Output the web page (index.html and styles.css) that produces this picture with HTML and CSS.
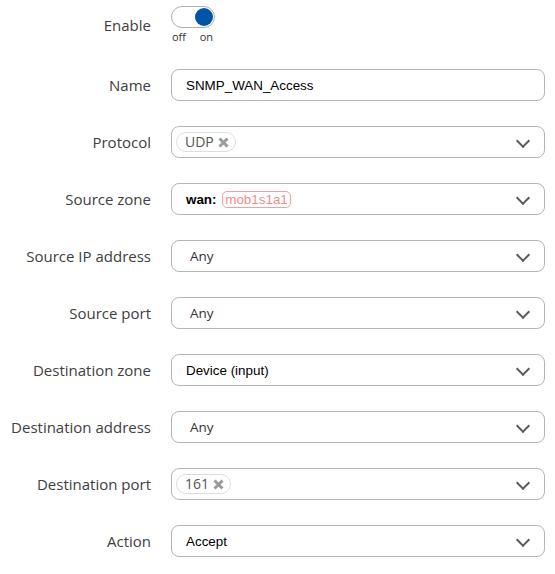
FILE: index.html
```html
<!DOCTYPE html>
<html>
<head>
<meta charset="utf-8">
<link rel="stylesheet" href="styles.css">
</head>
<body>
<div class="form">
  <div class="row row-toggle">
    <div class="label">Enable</div>
    <div class="toggle-wrap">
      <div class="toggle"><span class="knob"></span></div>
      <div class="toggle-text"><span>off</span><span>on</span></div>
    </div>
  </div>

  <div class="row">
    <div class="label">Name</div>
    <div class="field"><span class="val">SNMP_WAN_Access</span></div>
  </div>

  <div class="row">
    <div class="label">Protocol</div>
    <div class="field select chips"><span class="chip">UDP<svg class="x" width="11" height="11" viewBox="0 0 11 11"><path d="M1.5 1.5 L9.5 9.5 M9.5 1.5 L1.5 9.5" stroke="#9a9a9a" stroke-width="3" stroke-linecap="butt"/></svg></span></div>
  </div>

  <div class="row">
    <div class="label">Source zone</div>
    <div class="field select"><span class="val"><b>wan:</b> <span class="zone">mob1s1a1</span></span></div>
  </div>

  <div class="row">
    <div class="label">Source IP address</div>
    <div class="field select"><span class="any">Any</span></div>
  </div>

  <div class="row">
    <div class="label">Source port</div>
    <div class="field select"><span class="any">Any</span></div>
  </div>

  <div class="row">
    <div class="label">Destination zone</div>
    <div class="field select"><span class="val">Device (input)</span></div>
  </div>

  <div class="row">
    <div class="label">Destination address</div>
    <div class="field select"><span class="any">Any</span></div>
  </div>

  <div class="row">
    <div class="label">Destination port</div>
    <div class="field select chips"><span class="chip">161<svg class="x" width="11" height="11" viewBox="0 0 11 11"><path d="M1.5 1.5 L9.5 9.5 M9.5 1.5 L1.5 9.5" stroke="#9a9a9a" stroke-width="3" stroke-linecap="butt"/></svg></span></div>
  </div>

  <div class="row">
    <div class="label">Action</div>
    <div class="field select"><span class="val">Accept</span></div>
  </div>
</div>
</body>
</html>
```

FILE: styles.css
```css
html, body {
  margin: 0;
  padding: 0;
  background: #fff;
}
.form {
  padding-top: 6px;
  display: flex;
  flex-direction: column;
  gap: 25px;
}
.row {
  display: grid;
  grid-template-columns: 151px 374px;
  column-gap: 20px;
  align-items: center;
}
.row-toggle {
  height: 38px;
  align-items: start;
}
.row-toggle .label {
  padding-top: 9px;
}
.label {
  text-align: right;
  font-family: "Open Sans", sans-serif;
  font-size: 15px;
  color: #404040;
  white-space: nowrap;
}
.toggle-wrap {
  display: flex;
  flex-direction: column;
  width: 44px;
}
.toggle {
  width: 44px;
  height: 22px;
  box-sizing: border-box;
  border: 1px solid #b0b0b0;
  border-radius: 11px;
  position: relative;
  background: #fff;
}
.knob {
  position: absolute;
  right: 1px;
  top: 1px;
  width: 18px;
  height: 18px;
  border-radius: 50%;
  background: #0054a6;
}
.toggle-text {
  display: flex;
  justify-content: space-between;
  font-family: "Open Sans", sans-serif;
  font-size: 11px;
  color: #333;
  line-height: 14px;
  margin-top: 2px;
  padding: 0 2px 0 1px;
}
.field {
  height: 32px;
  box-sizing: border-box;
  border: 1px solid #b5b5b5;
  border-radius: 8px;
  display: flex;
  align-items: center;
  padding-left: 14px;
  position: relative;
  background: #fff;
}
.select::after {
  content: "";
  position: absolute;
  right: 16px;
  top: 9px;
  width: 8px;
  height: 8px;
  border-right: 2px solid #5a5a5a;
  border-bottom: 2px solid #5a5a5a;
  transform: rotate(45deg);
}
.chips {
  padding-left: 4px;
}
.val {
  font-family: "Liberation Sans", Arial, sans-serif;
  font-size: 13.4px;
  color: #000;
}
.val b {
  font-weight: bold;
  margin-right: 2px;
}
.zone {
  font-weight: normal;
  color: #f08c8c;
  border: 1px solid #f4a0a0;
  border-radius: 5px;
  padding: 0 2px;
}
.any {
  font-family: "Open Sans", sans-serif;
  font-size: 13.5px;
  color: #333;
  padding-left: 4px;
}
.chip {
  display: inline-flex;
  align-items: center;
  gap: 4px;
  font-family: "Open Sans", sans-serif;
  font-size: 14px;
  color: #555;
  border: 1px solid #ddd;
  border-radius: 10px;
  padding: 0 6px 0 8px;
  line-height: 18px;
}
.chip .x {
  display: block;
}
```
